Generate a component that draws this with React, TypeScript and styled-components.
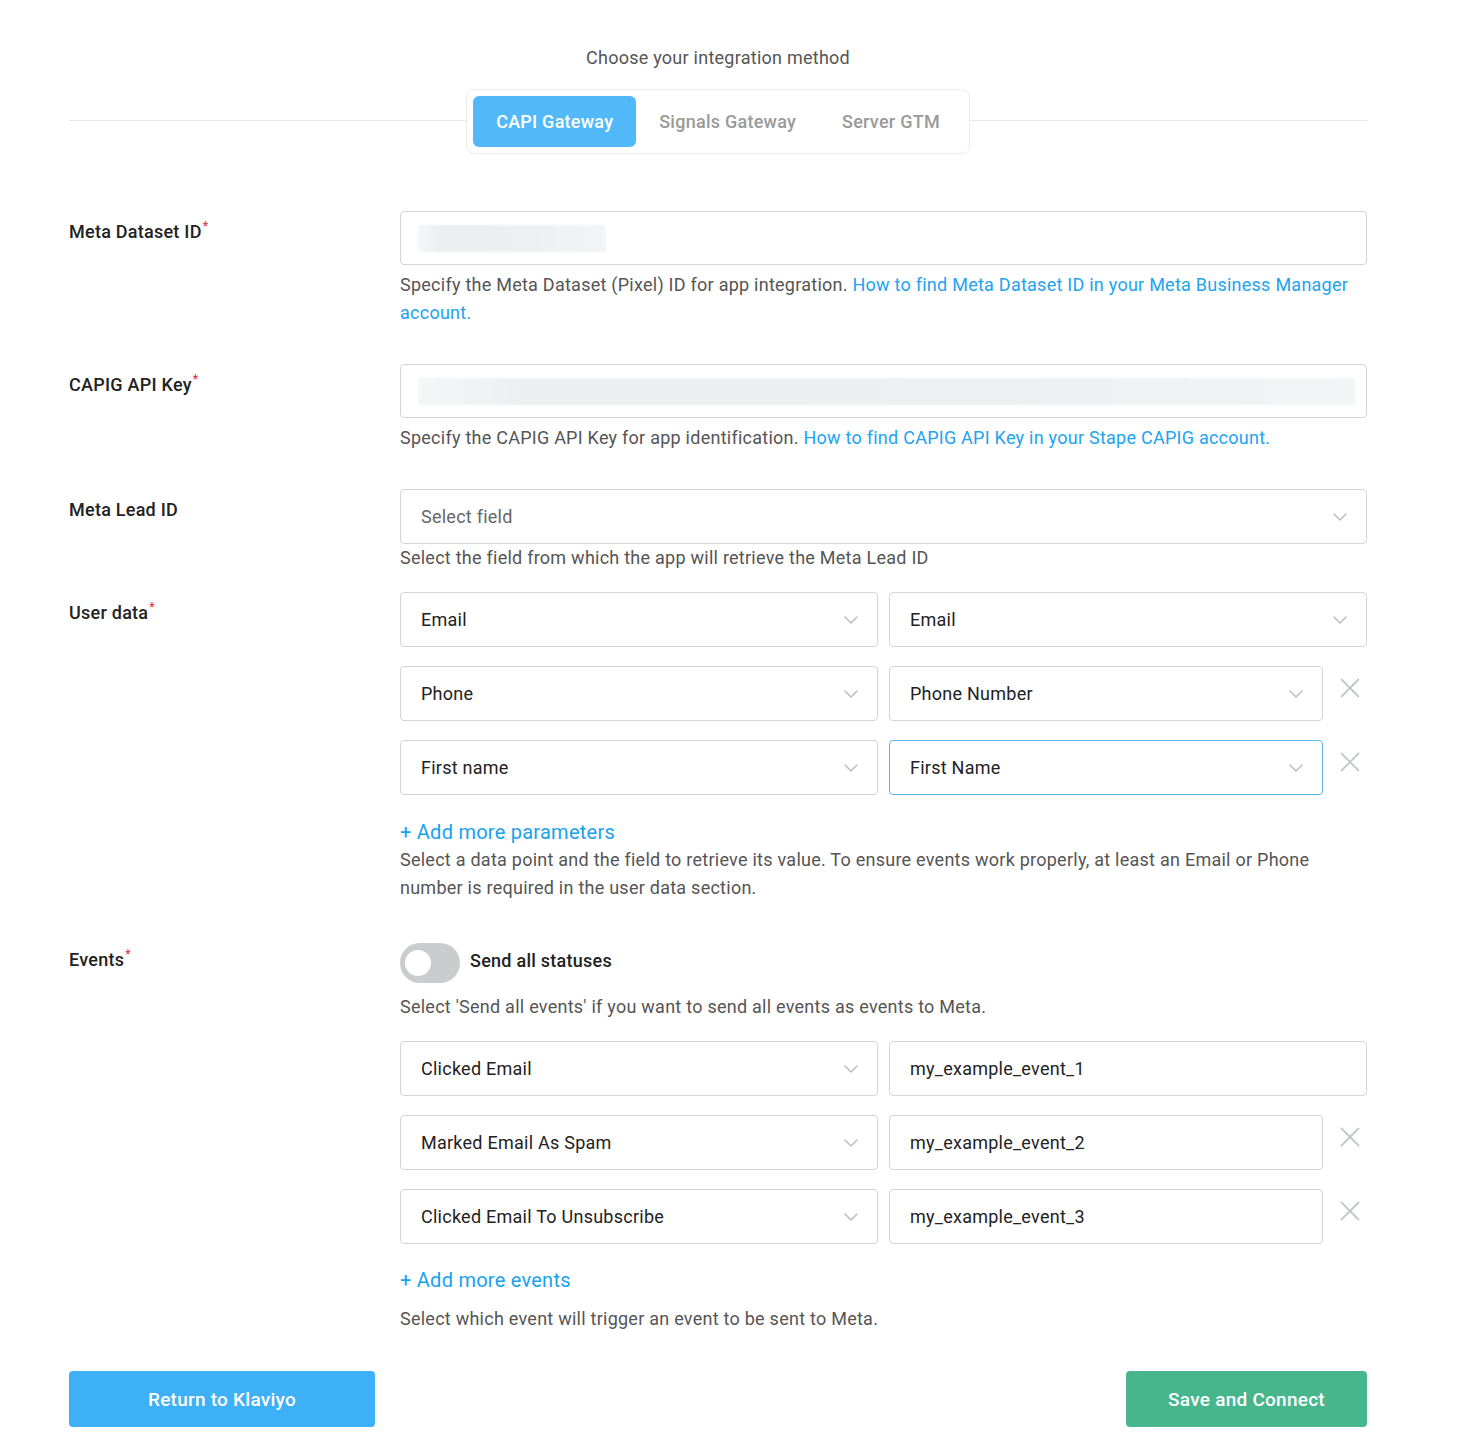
import React, { useState } from 'react';
import styled, { createGlobalStyle } from 'styled-components';

const GlobalStyle = createGlobalStyle`
  body {
    margin: 0;
    background: #ffffff;
    font-family: Roboto, "Noto Sans", Arial, sans-serif;
    letter-spacing: 0.25px;
    color: #222;
  }
  * {
    box-sizing: border-box;
  }
`;

const Page = styled.div`
  width: 1298px;
  margin-left: 69px;
  padding: 47px 0 30px;
`;

const Title = styled.div`
  text-align: center;
  font-size: 18px;
  line-height: 22px;
  color: #555;
`;

const TabsRow = styled.div`
  display: flex;
  align-items: center;
  margin-top: 20px;
  margin-bottom: 57px;
`;

const Divider = styled.div`
  flex: 1;
  height: 1px;
  background: #e6e6e6;
  margin-top: -3px;
`;

const Tabs = styled.div`
  display: flex;
  padding: 6px;
  border: 1px solid #ececec;
  border-radius: 8px;
  background: #fff;
`;

const Tab = styled.button<{ $active?: boolean }>`
  border: none;
  height: 51px;
  padding: 0 23px;
  border-radius: 6px;
  font-family: inherit;
  letter-spacing: inherit;
  font-size: 18px;
  font-weight: 500;
  cursor: pointer;
  background: ${({ $active }) => ($active ? '#52b9f9' : 'transparent')};
  color: ${({ $active }) => ($active ? '#ffffff' : '#9a9a9a')};
`;

const Section = styled.div<{ $mb: number }>`
  display: grid;
  grid-template-columns: 331px 1fr;
  margin-bottom: ${({ $mb }) => $mb}px;
`;

const Label = styled.div<{ $top?: number }>`
  padding-top: ${({ $top }) => $top ?? 10}px;
  font-size: 18px;
  line-height: 22px;
  font-weight: 500;
  color: #222;
`;

const Req = styled.sup`
  color: #e0344a;
  font-size: 12px;
  margin-left: 1px;
  vertical-align: 8px;
  line-height: 0;
`;

const Field = styled.div<{ $focused?: boolean; $h?: number }>`
  flex: 1;
  height: ${({ $h }) => $h ?? 55}px;
  display: flex;
  align-items: center;
  justify-content: space-between;
  padding: 0 19px 0 20px;
  border: 1px solid ${({ $focused }) => ($focused ? '#5ab4ee' : '#d3d5d8')};
  border-radius: 4px;
  background: #fff;
  font-size: 18px;
  color: #222;
  min-width: 0;
`;

const Placeholder = styled.span`
  color: #666;
`;

const Redacted = styled.div<{ $w: string }>`
  width: ${({ $w }) => $w};
  flex-shrink: 0;
  height: 27px;
  margin-left: -3px;
  background: linear-gradient(90deg, #f5f6f7 0%, #eceef0 12%, #eeeff1 60%, #f3f4f5 100%);
  filter: blur(1px);
`;

const Help = styled.div<{ $mt: number }>`
  margin-top: ${({ $mt }) => $mt}px;
  font-size: 18px;
  line-height: 28px;
  color: #555;
`;

const Link = styled.a`
  color: #21a3f1;
  text-decoration: none;
  cursor: pointer;
`;

const Rows = styled.div<{ $mt?: number }>`
  display: flex;
  flex-direction: column;
  gap: 19px;
  margin-top: ${({ $mt }) => $mt ?? 0}px;
`;

const Row = styled.div`
  display: flex;
  gap: 11px;
`;

const FirstCol = styled.div`
  width: 478px;
  display: flex;
`;

const RemoveCell = styled.button`
  width: 44px;
  margin-left: -11px;
  padding: 12px 0 0 17px;
  border: none;
  background: transparent;
  display: flex;
  align-items: flex-start;
  cursor: pointer;
`;

const AddMore = styled.a<{ $mt: number }>`
  display: block;
  margin-top: ${({ $mt }) => $mt}px;
  font-size: 20px;
  line-height: 28px;
  color: #17a2f0;
  cursor: pointer;
`;

const ToggleRow = styled.div`
  display: flex;
  align-items: center;
  gap: 10px;
`;

const Toggle = styled.button<{ $on: boolean }>`
  width: 60px;
  height: 40px;
  border-radius: 20px;
  border: none;
  padding: 0;
  position: relative;
  cursor: pointer;
  background: ${({ $on }) => ($on ? '#52b9f9' : '#cbcccd')};
`;

const Knob = styled.span<{ $on: boolean }>`
  position: absolute;
  top: 7px;
  left: ${({ $on }) => ($on ? '29px' : '5px')};
  width: 26px;
  height: 26px;
  border-radius: 50%;
  background: #fff;
`;

const ToggleLabel = styled.span`
  margin-top: -5px;
  font-size: 18px;
  font-weight: 500;
  color: #222;
`;

const Footer = styled.div`
  display: flex;
  justify-content: space-between;
`;

const ActionButton = styled.button<{ $color: string; $w: number }>`
  width: ${({ $w }) => $w}px;
  height: 56px;
  border: none;
  border-radius: 4px;
  background: ${({ $color }) => $color};
  color: #fff;
  font-family: inherit;
  letter-spacing: inherit;
  font-size: 19px;
  font-weight: 500;
  cursor: pointer;
`;

const Chevron = () => (
  <svg width="14" height="8" viewBox="0 0 14 8" fill="none">
    <polyline points="1,1 7,7 13,1" stroke="#b9bdc1" strokeWidth="1.5" strokeLinecap="round" strokeLinejoin="round" />
  </svg>
);

const Cross = () => (
  <svg width="20" height="20" viewBox="0 0 20 20" fill="none">
    <line x1="1" y1="1" x2="19" y2="19" stroke="#c3c6ca" strokeWidth="1.8" />
    <line x1="19" y1="1" x2="1" y2="19" stroke="#c3c6ca" strokeWidth="1.8" />
  </svg>
);

const Select = ({ value, focused }: { value: string; focused?: boolean }) => (
  <Field $focused={focused}>
    <span>{value}</span>
    <Chevron />
  </Field>
);

type Pair = { left: string; right: string; removable: boolean; focused?: boolean };

const userData: Pair[] = [
  { left: 'Email', right: 'Email', removable: false },
  { left: 'Phone', right: 'Phone Number', removable: true },
  { left: 'First name', right: 'First Name', removable: true, focused: true },
];

const events: Pair[] = [
  { left: 'Clicked Email', right: 'my_example_event_1', removable: false },
  { left: 'Marked Email As Spam', right: 'my_example_event_2', removable: true },
  { left: 'Clicked Email To Unsubscribe', right: 'my_example_event_3', removable: true },
];

export default function App() {
  const [method, setMethod] = useState('CAPI Gateway');
  const [sendAll, setSendAll] = useState(false);

  return (
    <>
      <GlobalStyle />
      <Page>
        <Title>Choose your integration method</Title>
        <TabsRow>
          <Divider />
          <Tabs>
            {['CAPI Gateway', 'Signals Gateway', 'Server GTM'].map((t) => (
              <Tab key={t} $active={method === t} onClick={() => setMethod(t)}>
                {t}
              </Tab>
            ))}
          </Tabs>
          <Divider />
        </TabsRow>

        <Section $mb={37}>
          <Label>
            Meta Dataset ID<Req>*</Req>
          </Label>
          <div>
            <Field $h={54}>
              <Redacted $w="188px" />
            </Field>
            <Help $mt={6}>
              Specify the Meta Dataset (Pixel) ID for app integration.{' '}
              <Link>How to find Meta Dataset ID in your Meta Business Manager account.</Link>
            </Help>
          </div>
        </Section>

        <Section $mb={37}>
          <Label>
            CAPIG API Key<Req>*</Req>
          </Label>
          <div>
            <Field $h={54}>
              <Redacted $w="calc(100% + 11px)" />
            </Field>
            <Help $mt={6}>
              Specify the CAPIG API Key for app identification.{' '}
              <Link>How to find CAPIG API Key in your Stape CAPIG account.</Link>
            </Help>
          </div>
        </Section>

        <Section $mb={20}>
          <Label>Meta Lead ID</Label>
          <div>
            <Field>
              <Placeholder>Select field</Placeholder>
              <Chevron />
            </Field>
            <Help $mt={0}>Select the field from which the app will retrieve the Meta Lead ID</Help>
          </div>
        </Section>

        <Section $mb={41}>
          <Label>
            User data<Req>*</Req>
          </Label>
          <div>
            <Rows>
              {userData.map((r) => (
                <Row key={r.left}>
                  <FirstCol>
                    <Select value={r.left} />
                  </FirstCol>
                  <Select value={r.right} focused={r.focused} />
                  {r.removable && (
                    <RemoveCell aria-label="Remove">
                      <Cross />
                    </RemoveCell>
                  )}
                </Row>
              ))}
            </Rows>
            <AddMore $mt={23}>+ Add more parameters</AddMore>
            <Help $mt={0}>
              Select a data point and the field to retrieve its value. To ensure events work properly, at least an Email or Phone
              number is required in the user data section.
            </Help>
          </div>
        </Section>

        <Section $mb={38}>
          <Label $top={6}>
            Events<Req>*</Req>
          </Label>
          <div>
            <ToggleRow>
              <Toggle $on={sendAll} onClick={() => setSendAll(!sendAll)}>
                <Knob $on={sendAll} />
              </Toggle>
              <ToggleLabel>Send all statuses</ToggleLabel>
            </ToggleRow>
            <Help $mt={10}>Select 'Send all events' if you want to send all events as events to Meta.</Help>
            <Rows $mt={20}>
              {events.map((r) => (
                <Row key={r.left}>
                  <FirstCol>
                    <Select value={r.left} />
                  </FirstCol>
                  <Field>
                    <span>{r.right}</span>
                  </Field>
                  {r.removable && (
                    <RemoveCell aria-label="Remove">
                      <Cross />
                    </RemoveCell>
                  )}
                </Row>
              ))}
            </Rows>
            <AddMore $mt={22}>+ Add more events</AddMore>
            <Help $mt={11}>Select which event will trigger an event to be sent to Meta.</Help>
          </div>
        </Section>

        <Footer>
          <ActionButton $color="#3db0f8" $w={306}>
            Return to Klaviyo
          </ActionButton>
          <ActionButton $color="#47b68c" $w={241}>
            Save and Connect
          </ActionButton>
        </Footer>
      </Page>
    </>
  );
}
